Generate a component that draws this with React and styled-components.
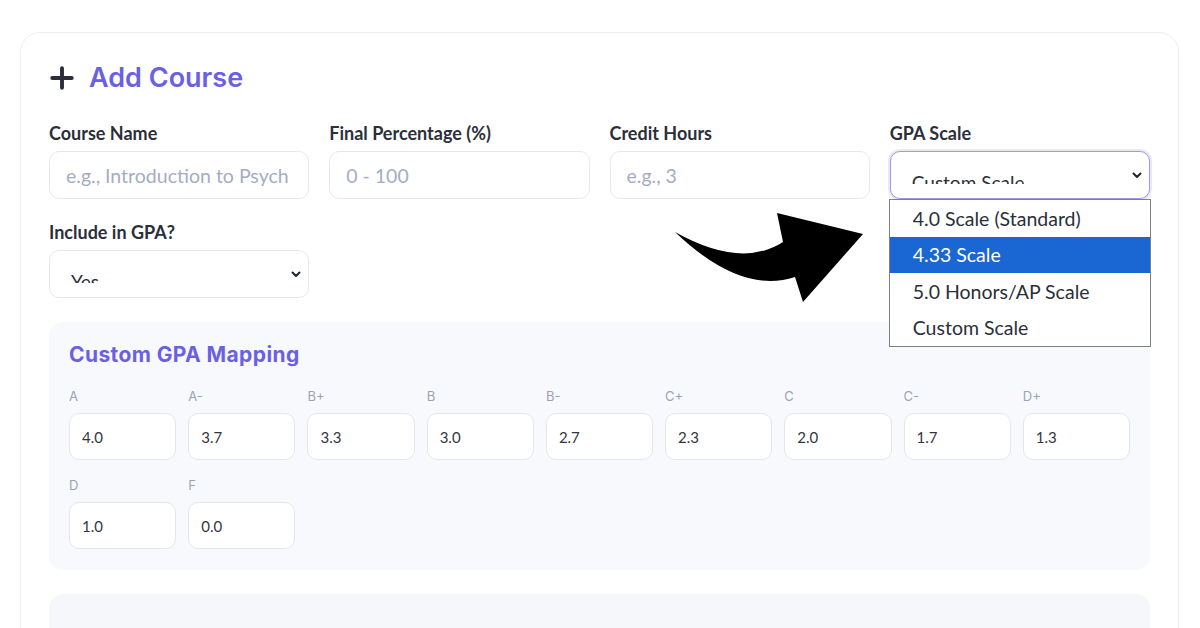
import React from 'react';
import styled, { createGlobalStyle } from 'styled-components';

const GlobalStyle = createGlobalStyle`
  * { box-sizing: border-box; }
  body {
    margin: 0;
    background: #ffffff;
    font-family: Lato, "Noto Sans", sans-serif;
    color: #2b2f3a;
  }
`;

const Page = styled.div`
  height: 628px;
  overflow: hidden;
  padding: 32px 21px 0 20px;
`;

const Card = styled.div`
  position: relative;
  background: #ffffff;
  border: 1px solid #eceef4;
  border-radius: 20px;
  padding: 28px 28px 40px;
`;

const Heading = styled.h2`
  display: flex;
  align-items: center;
  gap: 14px;
  margin: 0 0 28px;
  font-family: Inter, "Noto Sans", sans-serif;
  font-weight: 600;
  font-size: 27px;
  line-height: 34px;
  color: #6a60e6;

  svg {
    width: 26px;
    height: 26px;
    color: #2a2e3b;
  }
`;

const FieldGrid = styled.div`
  display: grid;
  grid-template-columns: repeat(4, 1fr);
  column-gap: 20px;
  row-gap: 23px;
`;

const Field = styled.div`
  position: relative;
  display: flex;
  flex-direction: column;
`;

const Label = styled.label`
  font-size: 18px;
  font-weight: 700;
  line-height: 20px;
  color: #2b2f3a;
  margin-bottom: 8px;
`;

const TextInput = styled.input`
  height: 48px;
  width: 100%;
  border: 1px solid #e6e8ee;
  border-radius: 10px;
  padding: 0 16px;
  font-family: Lato, "Noto Sans", sans-serif;
  font-size: 19.5px;
  color: #2b2f3a;
  background: #ffffff;
  outline: none;

  &::placeholder {
    color: #a3adc2;
  }
`;

const SelectBox = styled.div`
  height: 48px;
  border: 1px solid ${({ $focused }) => ($focused ? '#9f96f0' : '#e6e8ee')};
  box-shadow: ${({ $focused }) => ($focused ? '0 0 0 2px rgba(106, 96, 230, 0.14)' : 'none')};
  border-radius: 10px;
  padding: 0 6px 0 21px;
  display: flex;
  justify-content: space-between;
  background: #ffffff;
`;

const ClippedValue = styled.span`
  display: block;
  height: 32px;
  overflow: hidden;
  padding-top: 21px;
  font-size: 19px;
  line-height: 19px;
  color: #2b2f3a;
`;

const Chevron = styled.svg`
  align-self: center;
  width: 12px;
  height: 12px;
  color: #1f2330;
`;

const OptionList = styled.ul`
  position: absolute;
  top: 76px;
  left: -1px;
  right: -1px;
  margin: 0;
  padding: 0;
  list-style: none;
  background: #ffffff;
  border: 1px solid #808080;
  z-index: 5;
`;

const Option = styled.li`
  height: 36.5px;
  display: flex;
  align-items: center;
  padding-left: 23px;
  font-size: 19.5px;
  color: ${({ $active }) => ($active ? '#ffffff' : '#2b2f3a')};
  background: ${({ $active }) => ($active ? '#1a66d2' : 'transparent')};
`;

const ArrowMark = styled.svg`
  position: absolute;
  left: 639px;
  top: 167px;
  width: 210px;
  height: 110px;
  z-index: 4;
`;

const MappingPanel = styled.div`
  margin-top: 24px;
  background: #f8f9fc;
  border-radius: 14px;
  padding: 21px 20px 21px;
`;

const MappingTitle = styled.h3`
  margin: 0 0 21px;
  font-family: Inter, "Noto Sans", sans-serif;
  font-weight: 700;
  font-size: 21px;
  letter-spacing: 0.4px;
  line-height: 24px;
  color: #6a60e6;
`;

const GradeGrid = styled.div`
  display: grid;
  grid-template-columns: repeat(9, 1fr);
  column-gap: 12px;
  row-gap: 17px;
`;

const GradeCell = styled.div`
  display: flex;
  flex-direction: column;
`;

const GradeLabel = styled.span`
  font-family: Inter, "Noto Sans", sans-serif;
  font-size: 13px;
  line-height: 16px;
  color: #9aa3b5;
  margin-bottom: 9px;
`;

const GradeInput = styled.input`
  height: 47px;
  width: 100%;
  border: 1px solid #e4e6ec;
  border-radius: 10px;
  padding: 0 12px;
  background: #ffffff;
  font-family: Lato, "Noto Sans", sans-serif;
  font-size: 15px;
  color: #33363f;
  outline: none;
`;

const NextPanel = styled.div`
  margin-top: 24px;
  height: 80px;
  background: #f5f7fb;
  border-radius: 14px;
`;

const grades = [
  ['A', '4.0'],
  ['A-', '3.7'],
  ['B+', '3.3'],
  ['B', '3.0'],
  ['B-', '2.7'],
  ['C+', '2.3'],
  ['C', '2.0'],
  ['C-', '1.7'],
  ['D+', '1.3'],
  ['D', '1.0'],
  ['F', '0.0'],
];

const scaleOptions = ['4.0 Scale (Standard)', '4.33 Scale', '5.0 Honors/AP Scale', 'Custom Scale'];

const ChevronDown = () => (
  <Chevron viewBox="0 0 24 24" fill="none" stroke="currentColor" strokeWidth="4" strokeLinecap="round" strokeLinejoin="round">
    <path d="M5 9l7 7 7-7" />
  </Chevron>
);

const FakeSelect = ({ value, focused }) => (
  <SelectBox $focused={focused}>
    <ClippedValue>{value}</ClippedValue>
    <ChevronDown />
  </SelectBox>
);

export default function App() {
  return (
    <>
      <GlobalStyle />
      <Page>
        <Card>
          <Heading>
            <svg viewBox="0 0 24 24" fill="none" stroke="currentColor" strokeWidth="3.6" strokeLinecap="round">
              <path d="M12 3v18M3 12h18" />
            </svg>
            Add Course
          </Heading>

          <FieldGrid>
            <Field>
              <Label>Course Name</Label>
              <TextInput placeholder="e.g., Introduction to Psych" />
            </Field>
            <Field>
              <Label>Final Percentage (%)</Label>
              <TextInput placeholder="0 - 100" />
            </Field>
            <Field>
              <Label>Credit Hours</Label>
              <TextInput placeholder="e.g., 3" />
            </Field>
            <Field>
              <Label>GPA Scale</Label>
              <FakeSelect value="Custom Scale" focused />
              <OptionList>
                {scaleOptions.map((opt) => (
                  <Option key={opt} $active={opt === '4.33 Scale'}>{opt}</Option>
                ))}
              </OptionList>
            </Field>
            <Field>
              <Label>Include in GPA?</Label>
              <FakeSelect value="Yes" />
            </Field>
          </FieldGrid>

          <ArrowMark viewBox="660 200 210 110">
            <path d="M675 232 Q741 269 783 242 L777 213 L863 234 L803 302 L795 277 Q741 295 675 232 Z" fill="#000" />
          </ArrowMark>

          <MappingPanel>
            <MappingTitle>Custom GPA Mapping</MappingTitle>
            <GradeGrid>
              {grades.map(([grade, value]) => (
                <GradeCell key={grade}>
                  <GradeLabel>{grade}</GradeLabel>
                  <GradeInput defaultValue={value} />
                </GradeCell>
              ))}
            </GradeGrid>
          </MappingPanel>

          <NextPanel />
        </Card>
      </Page>
    </>
  );
}
